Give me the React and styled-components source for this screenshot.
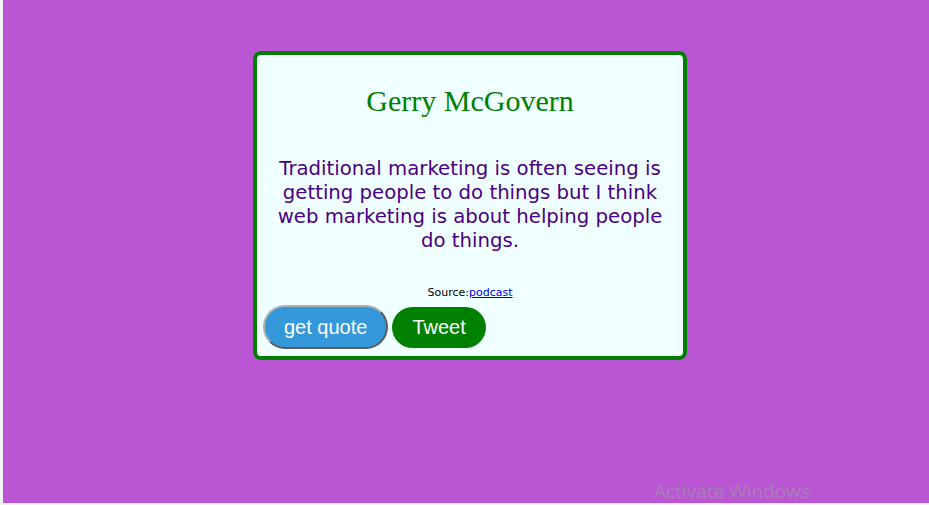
import React from 'react';
import styled, { createGlobalStyle } from 'styled-components';

const GlobalStyle = createGlobalStyle`
  html, body {
    margin: 0;
    padding: 0;
    background: #f3f3f3;
  }
`;

const Page = styled.div`
  margin-left: 3px;
  height: 503px;
  background-color: #ba55d3;
  padding-top: 51px;
  box-sizing: border-box;
  position: relative;
  overflow: hidden;
`;

const QuoteBox = styled.div`
  width: 434px;
  height: 309px;
  box-sizing: border-box;
  margin-left: 250px;
  background-color: #f0ffff;
  border: 4px solid #008000;
  border-radius: 8px;
  display: flex;
  flex-direction: column;
  align-items: center;
  padding: 29px 6px 0;
`;

const Author = styled.h1`
  margin: 0;
  font-family: "Liberation Serif", serif;
  font-weight: normal;
  font-size: 30px;
  color: #008000;
`;

const Quote = styled.p`
  margin: 39px 0 0;
  width: 386px;
  font-family: "DejaVu Sans", sans-serif;
  font-size: 19.7px;
  line-height: 24px;
  text-align: center;
  color: #4b0082;
`;

const Source = styled.div`
  margin-top: 33px;
  font-family: "DejaVu Sans", sans-serif;
  font-size: 11px;
  color: #000;

  a {
    color: #0000ee;
  }
`;

const Buttons = styled.div`
  align-self: flex-start;
  display: flex;
  align-items: center;
  gap: 4px;
  margin-top: 6px;
`;

const Button = styled.button`
  font-family: "Liberation Sans", Arial, sans-serif;
  font-size: 20px;
  color: #fff;
  background-color: ${(p) => p.$bg};
  border: ${(p) => (p.$outset ? '2px outset #b0b0b0' : 'none')};
  border-radius: 22px;
  height: ${(p) => (p.$outset ? '44px' : '41px')};
  padding: 0 ${(p) => (p.$outset ? '19px' : '20px')};
  cursor: pointer;
`;

const Watermark = styled.div`
  position: absolute;
  left: 651px;
  top: 482px;
  line-height: 1;
  font-family: "Open Sans", "Liberation Sans", sans-serif;
  font-size: 19px;
  color: rgba(160, 140, 170, 0.8);
`;

export default function App() {
  return (
    <>
      <GlobalStyle />
      <Page>
        <QuoteBox>
          <Author>Gerry McGovern</Author>
          <Quote>
            Traditional marketing is often seeing is getting people to do things but I think web marketing is about helping people do things.
          </Quote>
          <Source>
            Source:<a href="#">podcast</a>
          </Source>
          <Buttons>
            <Button $bg="#3498db" $outset>get quote</Button>
            <Button $bg="#008000">Tweet</Button>
          </Buttons>
        </QuoteBox>
        <Watermark>Activate Windows</Watermark>
      </Page>
    </>
  );
}
